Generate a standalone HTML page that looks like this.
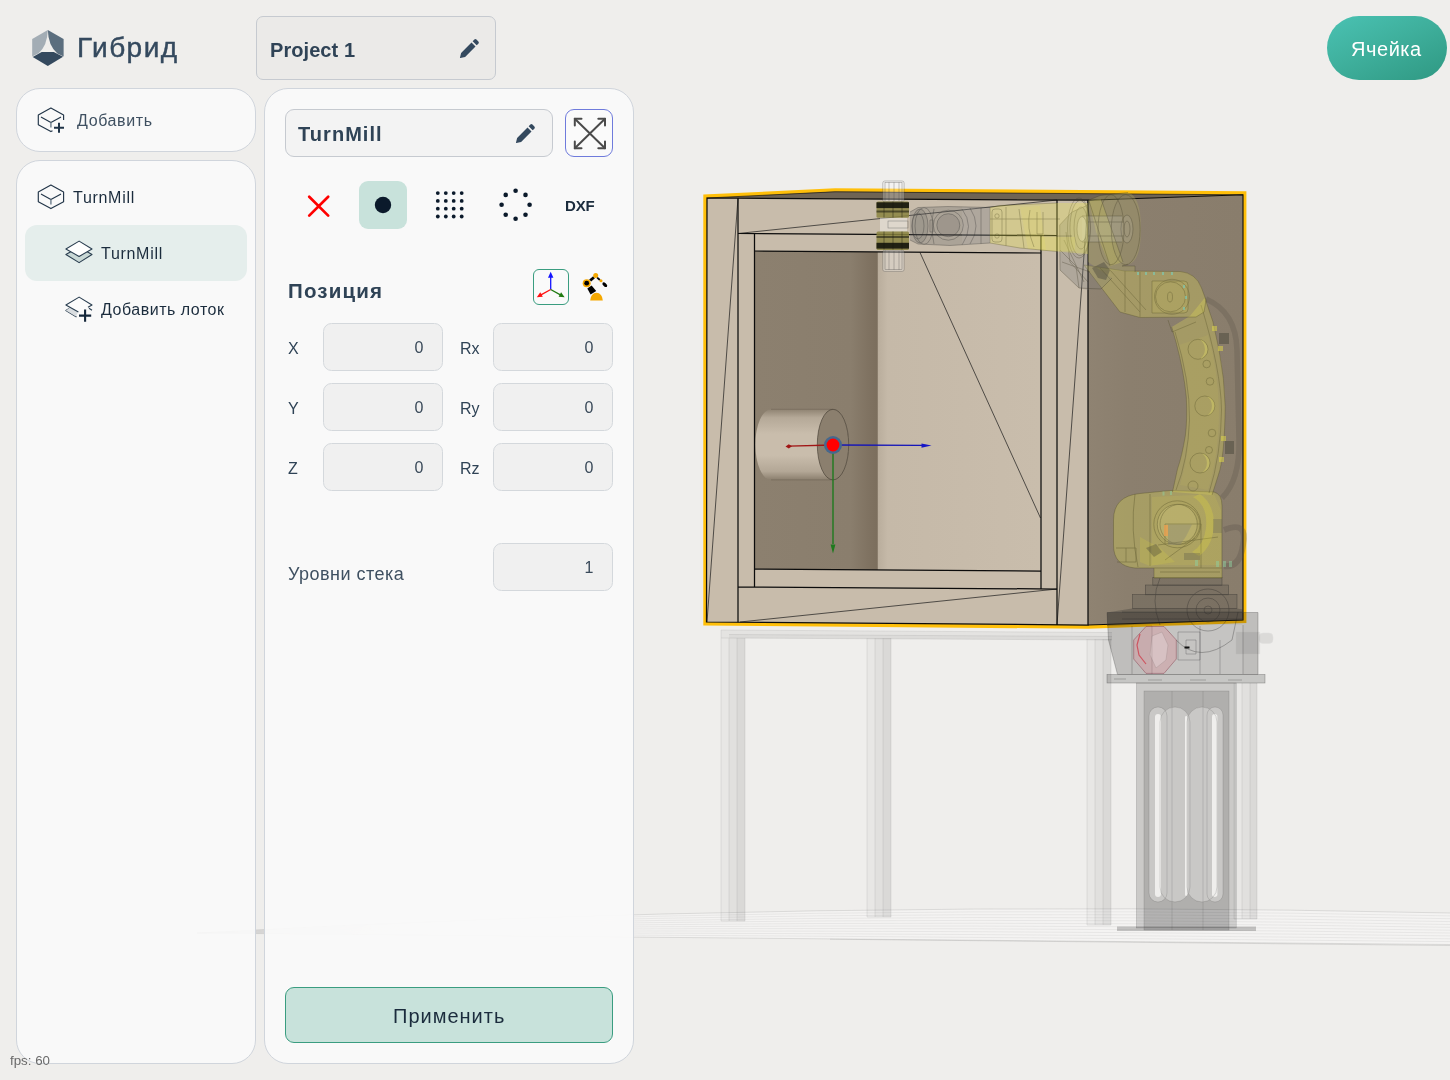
<!DOCTYPE html>
<html lang="ru">
<head>
<meta charset="utf-8">
<title>Гибрид</title>
<style>
*{box-sizing:border-box;margin:0;padding:0}
html,body{width:1450px;height:1080px;overflow:hidden;background:#efeeec;font-family:"Liberation Sans",sans-serif;color:#2f4356}
.abs{position:absolute}
#scene{position:absolute;left:0;top:0;width:1450px;height:1080px}
.panel{position:absolute;background:rgba(250,250,250,0.93);border:1px solid #d0d5dc;border-radius:24px}
.t{position:absolute;white-space:nowrap;line-height:1;will-change:transform}
.inp{will-change:transform;position:absolute;width:120px;height:48px;background:#f0f0f0;border:1px solid #d4d8dc;border-radius:8.5px;font-size:16px;color:#3a4a5a;text-align:right;padding:16px 18.5px 0 0;line-height:1}
.lbl{will-change:transform;position:absolute;font-size:16px;color:#2f4356;line-height:1;white-space:nowrap}
</style>
</head>
<body>
<!--SCENE-->
<svg id="scene" viewBox="0 0 1450 1080">
<defs>
  <linearGradient id="gDark" x1="0" x2="1" y1="0" y2="0">
    <stop offset="0" stop-color="#8c806f"/><stop offset="0.78" stop-color="#8a7e6d"/><stop offset="0.93" stop-color="#7f7261"/><stop offset="1" stop-color="#7b6e5d"/>
  </linearGradient>
  <linearGradient id="gSide" x1="0" x2="1" y1="0" y2="0">
    <stop offset="0" stop-color="#8f8372"/><stop offset="0.25" stop-color="#8b7f6e"/><stop offset="1" stop-color="#897d6c"/>
  </linearGradient>
  <linearGradient id="gBack" x1="0" x2="1" y1="0" y2="0">
    <stop offset="0" stop-color="#b9ad9c"/><stop offset="0.06" stop-color="#c5b9a8"/><stop offset="1" stop-color="#c9bdac"/>
  </linearGradient>
  <linearGradient id="gCyl" x1="0" x2="0" y1="0" y2="1">
    <stop offset="0" stop-color="#8f8372"/><stop offset="0.12" stop-color="#b5a998"/><stop offset="0.35" stop-color="#c9bdac"/><stop offset="0.65" stop-color="#c9bdac"/><stop offset="0.88" stop-color="#b3a796"/><stop offset="1" stop-color="#8b7f6e"/>
  </linearGradient>
</defs>

<!-- floor grid -->
<path d="M197 933 Q810 898.6 1450 913 L1450 944.5 Z" fill="#fff" opacity="0.32"/>
<g id="floor" stroke="#888" stroke-width="0.55" fill="none" opacity="0.55"><path d="M197 933 Q810 898.6 1450 913.0" opacity="0.75"/><path d="M197 933 Q810 902.2 1450 915.9" opacity="0.4"/><path d="M197 933 Q810 905.9 1450 918.7" opacity="0.4"/><path d="M197 933 Q810 909.6 1450 921.6" opacity="0.4"/><path d="M197 933 Q810 913.2 1450 924.5" opacity="0.4"/><path d="M197 933 Q810 916.9 1450 927.3" opacity="0.4"/><path d="M197 933 Q810 920.5 1450 930.2" opacity="0.4"/><path d="M197 933 Q810 924.1 1450 933.0" opacity="0.4"/><path d="M197 933 Q810 927.8 1450 935.9" opacity="0.4"/><path d="M197 933 Q810 931.5 1450 938.8" opacity="0.4"/><path d="M197 933 Q810 935.1 1450 941.6" opacity="0.4"/><path d="M197 933 Q810 938.8 1450 944.5" opacity="0.75"/><path d="M830 939.2 L1450 945.5" opacity="0.8"/></g>

<!-- table -->
<g id="table">
  <path d="M721 630 L1112 632.5 L1112 640 L721 638 Z" fill="#000" fill-opacity="0.045"/>
  <path d="M729 634.5 L1112 636.5 L1112 640 L729 638 Z" fill="#000" fill-opacity="0.03"/>
  <g fill="#000" fill-opacity="0.028"><rect x="721" y="638" width="24" height="283"/><rect x="729" y="638" width="16" height="283"/><rect x="737" y="638" width="8" height="283"/><rect x="867" y="638" width="24" height="279"/><rect x="875" y="638" width="16" height="279"/><rect x="883" y="638" width="8" height="279"/><rect x="1087" y="639" width="24" height="286"/><rect x="1095" y="639" width="16" height="286"/><rect x="1103" y="639" width="8" height="286"/><rect x="1234" y="683" width="23" height="236"/><rect x="1242" y="683" width="15" height="236"/><rect x="1250" y="683" width="7" height="236"/></g>
  <g fill="none" stroke="#777" stroke-width="0.5" opacity="0.3"><path d="M721 638V921H745V638 M729 638V921 M737 638V921"/><path d="M867 638V917H891V638 M875 638V917 M883 638V917"/><path d="M1087 639V925H1111V639 M1095 639V925 M1103 639V925"/><path d="M1234 683V919H1257V683 M1242 683V919 M1250 683V919"/><path d="M721 630 L1112 632.5 M729 634.5 L1112 636.5 M721 638 L1112 640 M721 630 V638"/></g>
</g>

<!-- pedestal -->
<g id="pedestal">
  <rect x="1136.4" y="683" width="99.8" height="245" fill="#000" fill-opacity="0.15"/>
  <rect x="1144" y="691" width="85" height="239" fill="#000" fill-opacity="0.135"/>
  <path d="M1149 716.0 A9.0 9.0 0 0 1 1167 716.0 V893.0 A9.0 9.0 0 0 1 1149 893.0 Z M1160 722.0 A15.0 15.0 0 0 1 1190 722.0 V887.0 A15.0 15.0 0 0 1 1160 887.0 Z M1187 722.0 A15.0 15.0 0 0 1 1217 722.0 V887.0 A15.0 15.0 0 0 1 1187 887.0 Z M1207 715.0 A8.0 8.0 0 0 1 1223 715.0 V894.0 A8.0 8.0 0 0 1 1207 894.0 Z " fill="#efeeec" fill-opacity="0.40"/>
  <g fill="#efeeec">
    <rect x="1155" y="714" width="6" height="183" rx="3"/>
    <rect x="1185" y="716" width="2.4" height="180" rx="1.2"/>
    <rect x="1212" y="714" width="5.4" height="183" rx="2.7"/>
  </g>
  <g fill="none" stroke="#555" stroke-width="0.5" opacity="0.4">
    <path d="M1149 716.0 A9.0 9.0 0 0 1 1167 716.0 V893.0 A9.0 9.0 0 0 1 1149 893.0 Z M1160 722.0 A15.0 15.0 0 0 1 1190 722.0 V887.0 A15.0 15.0 0 0 1 1160 887.0 Z M1187 722.0 A15.0 15.0 0 0 1 1217 722.0 V887.0 A15.0 15.0 0 0 1 1187 887.0 Z M1207 715.0 A8.0 8.0 0 0 1 1223 715.0 V894.0 A8.0 8.0 0 0 1 1207 894.0 Z "/>
    <path d="M1172 691V930M1203 691V930"/>
    <rect x="1136.4" y="683" width="99.8" height="245"/><rect x="1144" y="691" width="85" height="239"/>
  </g>
  <rect x="1117" y="926.5" width="139" height="4.5" fill="#000" opacity="0.2"/>
</g>
<!-- box -->
<g id="box">
  <!-- yellow selection outline -->
  <path d="M703.3 625.6 L703.3 194.6 L835 188.2 L1246.4 191.2 L1246.4 622.9 L1088 628.7 Z" fill="#ffbf0a"/>
  <!-- top face -->
  <path d="M707 198 L835 191.6 L1243 194.8 L1088 200.3 Z" fill="#6f6454"/>
  <!-- side face -->
  <path d="M1088 200 L1243 194.8 L1243 620 L1088 625 Z" fill="url(#gSide)"/>
  <!-- front face -->
  <path d="M707 198 L1088 200 L1088 625 L706.5 622 Z" fill="#c8bcab"/>
  <!-- interior back (light) & dark side -->
  <path d="M877.8 252 L1041 253 L1041 571 L877.8 570 Z" fill="url(#gBack)"/>
  <path d="M754.5 251 L877.8 252 L877.8 570 L754.5 569 Z" fill="url(#gDark)"/>
  <!-- cylinder -->
  <path d="M771 409.3 L833 409.3 A15.7 35.3 0 0 1 833 479.9 L771 479.9 A15.7 35.3 0 0 1 771 409.3 Z" fill="url(#gCyl)"/>
  <path d="M771 409.3 L833 409.3 M771 479.9 L833 479.9" stroke="#5a5043" stroke-width="0.6" opacity="0.6"/>
  <ellipse cx="833" cy="444.6" rx="15.7" ry="35.3" fill="#8b7f6e" stroke="#3c352c" stroke-width="0.6"/>
  <!-- frame cover on cylinder left -->
  <rect x="739" y="400" width="15.5" height="90" fill="#c8bcab"/>
  <!-- thin diagonals -->
  <g stroke="#1a1a1a" stroke-width="0.7" fill="none">
    <path d="M707 622 L738 198"/>
    <path d="M738 233.5 L1057 200"/>
    <path d="M1057 625 L1088 200"/>
    <path d="M740 622 L1057 589"/>
    <path d="M920 252.5 L1040.5 518"/>
    <path d="M1088 200 L1243 620" opacity="0"/>
  </g>
  <!-- thick edges -->
  <g stroke="#0c0c0c" stroke-width="1.25" fill="none" stroke-linejoin="miter">
    <path d="M707 198 L1088 200.2 L1088 625 L706.5 622 Z"/>
    <path d="M738 198.2 V622.2"/>
    <path d="M1057 200 V625"/>
    <path d="M738 233.5 L1057 235.5"/>
    <path d="M738 587 L1057 589"/>
    <path d="M754.5 233.6 V587.1"/>
    <path d="M1041 235.4 V589"/>
    <path d="M754.5 251 L1041 253"/>
    <path d="M754.5 569 L1041 571"/>
  </g>
  <g stroke="#0c0c0c" stroke-width="1.1" fill="none">
    <path d="M1088 200.2 L1243 194.8 L1243 620 L1088 625"/>
    <path d="M707 198 L835 191.8 L1243 194.8" stroke-width="0.9" opacity="0.7"/>
  </g>
  <!-- gizmo -->
  <g>
    <path d="M833 445 L789 446.2" stroke="#a01515" stroke-width="1.3"/>
    <path d="M785.5 446.4 L788.8 444.2 L792 446.2 L788.8 448.4 Z" fill="#a01515"/>
    <path d="M833 445 L922 445.4" stroke="#1515b8" stroke-width="1.3"/>
    <path d="M931.5 445.6 L921.5 443.4 L921.5 447.8 Z" fill="#1515c8"/>
    <path d="M833 445 L833 544" stroke="#1e7a1e" stroke-width="1.4"/>
    <path d="M833 553.5 L830.6 544.5 L835.4 544.5 Z" fill="#1e7a1e"/>
    <circle cx="833" cy="445" r="9" fill="#46688c"/>
    <circle cx="833" cy="445" r="6.4" fill="#ff0000"/>
  </g>
</g>

<!-- robot -->
<g id="robot">
  <!-- grey base below / inside box -->
  <g id="rbase">
    <path d="M1107 612.5 L1258 612.5 L1258 674.5 L1117.5 674.5 L1108.5 640 Z" fill="#000" opacity="0.2"/>
    <path d="M1152 625 L1243 625 L1243 674.5 L1152 674.5 Z" fill="#fff" opacity="0.10"/>
    <rect x="1107" y="674.5" width="158" height="8.5" fill="#000" opacity="0.17"/>
    <g fill="none" stroke="#333" stroke-width="0.6" opacity="0.45">
      <rect x="1107" y="674.5" width="158" height="8.5"/>
      <path d="M1107 612.5 L1258 612.5 L1258 674.5 L1117.5 674.5 L1108.5 640 Z"/>
      <path d="M1132 626V674 M1152 626V674 M1200 626V674 M1220 640V674 M1243 625V674"/>
      <path d="M1114 679h12 M1148 680h14 M1190 680h16 M1228 680h14"/>
    </g>
    <!-- stacked rings -->
    <rect x="1152.8" y="577.6" width="69.2" height="7.6" fill="#3a3a3a" opacity="0.17"/>
    <rect x="1145.4" y="585" width="83" height="9.8" fill="#3a3a3a" opacity="0.19"/>
    <rect x="1132.6" y="594.6" width="104.4" height="14" fill="#3a3a3a" opacity="0.19"/>
    <path d="M1107 612.5 L1132 608.4 L1237 608.4 L1243 609.5 L1243 620 L1107 626 Z" fill="#2a2a2a" opacity="0.30"/>
    <g fill="none" stroke="#222" stroke-width="0.6" opacity="0.5">
      <rect x="1152.8" y="577.6" width="69.2" height="7.6"/><rect x="1145.4" y="585" width="83" height="9.8"/><rect x="1132.6" y="594.6" width="104.4" height="14"/>
      <circle cx="1208" cy="610" r="21"/><circle cx="1208" cy="610" r="12"/><circle cx="1208" cy="610" r="4"/>
      <path d="M1160 578 Q1150 600 1160 625 M1122 612h120 M1122 619h120"/>
      <path d="M1176 640 Q1200 665 1232 640 L1238 612"/>
    </g>
    <!-- bolt right -->
    <rect x="1259" y="633" width="14" height="10.5" rx="4" fill="#000" opacity="0.08" stroke="#444" stroke-width="0.5"/>
    <rect x="1236" y="632" width="24" height="22" fill="#000" opacity="0.07" stroke="#555" stroke-width="0.4"/>
    <!-- pink octagon -->
    <path d="M1146 626.5 L1164 626.5 L1176.3 640 L1176.3 659 L1164 673.4 L1146 673.4 L1133.7 659 L1133.7 640 Z" fill="#d88c96" opacity="0.36"/>
    <path d="M1146 626.5 L1164 626.5 L1176.3 640 L1176.3 659 L1164 673.4 L1146 673.4 L1133.7 659 L1133.7 640 Z" fill="none" stroke="#7a3040" stroke-width="0.7" opacity="0.6"/>
    <path d="M1140 634 L1137 645 L1139 655 L1146 664" fill="none" stroke="#d03040" stroke-width="1.2" opacity="0.7"/>
    <path d="M1152 636 L1162 632 L1168 645 L1166 660 L1156 668 L1150 655 Z" fill="#fff" opacity="0.22" stroke="#444" stroke-width="0.5"/>
    <path d="M1178 632 h22 v28 h-22 z M1186 640 h10 v14 h-10z" fill="none" stroke="#444" stroke-width="0.5" opacity="0.6"/>
    <rect x="1184.5" y="646.5" width="5" height="2" fill="#111"/>
  </g>

  <!-- cable -->
  <path d="M1206 299 Q1236 312 1237 350 L1239 440 Q1240 480 1222 498" fill="none" stroke="#5a5148" stroke-width="5.5" opacity="0.28"/>
  <path d="M1224 530 Q1248 520 1243 545 Q1240 568 1224 566" fill="none" stroke="#5a5148" stroke-width="6" opacity="0.3"/>

  <!-- shoulder (yellow) -->
  <g id="shoulder">
    <path d="M1113.5 520 Q1113.5 496 1140 493.5 L1170 490.5 L1214 492 Q1222 494 1222 506 L1222 566 L1222 578 L1154 578 L1154 568 L1135 568 Q1113.5 566 1113.5 545 Z" fill="#ebe650" opacity="0.29"/>
    <path d="M1152 497 L1214 494 L1221 510 L1221 565 L1152 565 Z" fill="#ebe650" opacity="0.10"/>
    <circle cx="1177.3" cy="524.3" r="20" fill="#e0d890" opacity="0.22"/>
    <g fill="none" stroke="#4a4620" stroke-width="0.6" opacity="0.55">
      <path d="M1113.5 520 Q1113.5 496 1140 493.5 L1170 490.5 L1214 492 Q1222 494 1222 506 L1222 578 L1154 578 L1154 568 L1135 568 Q1113.5 566 1113.5 545 Z"/>
      <circle cx="1177.3" cy="524.3" r="20"/><circle cx="1177.3" cy="524.3" r="23.5"/><circle cx="1180" cy="524.3" r="20"/>
      <path d="M1135 494 Q1130 530 1138 567 M1150 494 V566 M1116 548 h20 v14 h-19 M1126 548 v14"/>
      <path d="M1165 524 h36 v44 M1165 524 v20 M1158 545 l60 -8 M1165 560 l30 -22"/>
      <path d="M1154 568 h68 M1160 572 h60"/>
    </g>
        <path d="M1168 524.500 h24 l-6 12 l-6 8.500 h-12 z" fill="#777" opacity="0.28"/>
    <path d="M1193 497 Q1208 505 1206 528 Q1204 545 1192 552 L1199 556 Q1214 545 1214 522 Q1213 503 1200 494 Z" fill="#f0ea30" opacity="0.22"/>
    <path d="M1140 537 L1160 548 L1175 562 L1150 566 L1140 562 Z" fill="#f0ea30" opacity="0.14"/>
    <path d="M1146 548 l10 -4 l6 8 l-8 5 z" fill="#333" opacity="0.3"/>
    <rect x="1184" y="553" width="16" height="7" fill="#444" opacity="0.25"/>
    <rect x="1213" y="519" width="9" height="14" fill="#555" opacity="0.25"/>
    <rect x="1164" y="525" width="4" height="11" fill="#e8a050" opacity="0.8"/>
    <g fill="#8fd0a0" opacity="0.5"><rect x="1162.500" y="491.500" width="2" height="4"/><rect x="1170" y="491" width="2" height="4"/><rect x="1195" y="560" width="3" height="6"/><rect x="1216" y="561" width="3" height="6"/><rect x="1223" y="561" width="3" height="6"/><rect x="1229" y="561" width="3" height="6"/></g>
    
  </g>

  <!-- upper arm -->
  <g id="upperarm">
    <path d="M1171.700 327 L1176 342 Q1184 372 1186.300 397 Q1187.500 420 1185.300 436 Q1182 456 1177.500 469 L1172.500 492 L1212 495 L1218.400 474.800 Q1224.500 458 1225.200 406.700 Q1224.500 378 1219 350 L1213 322 L1204.800 297.800 L1190 316 Z" fill="#ebe650" opacity="0.27"/>
    <path d="M1179 345 Q1190 380 1190 420 Q1189 455 1180 485 L1208 490 Q1219 455 1219 410 Q1218 370 1208 335 Z" fill="#ebe650" opacity="0.07"/>
    <g fill="none" stroke="#4a4620" stroke-width="0.6" opacity="0.5">
      <path d="M1171.700 327 L1176 342 Q1184 372 1186.300 397 Q1187.500 420 1185.300 436 Q1182 456 1177.500 469 L1172.500 492"/>
      <path d="M1204.800 297.800 L1213 322 L1219 350 Q1224.500 378 1225.200 406.700 Q1224.500 458 1218.400 474.800 L1212 495"/>
      <path d="M1175 332 Q1190 380 1189.500 420 Q1188 460 1176 490"/>
      <path d="M1201 305 Q1221 370 1221.500 410 Q1221 455 1209 493"/>
      <circle cx="1198" cy="349.300" r="10"/><circle cx="1204.800" cy="406" r="10"/><circle cx="1200" cy="463" r="10"/>
      <circle cx="1206.700" cy="364" r="3.800"/><circle cx="1210" cy="381.400" r="3.800"/><circle cx="1212" cy="433" r="3.800"/><circle cx="1209" cy="450" r="3.500"/>
      <circle cx="1193" cy="486" r="5"/>
    </g>
    <g fill="#e9e36a" opacity="0.35"><path d="M1200 339.600 A10 10 0 0 1 1200 359 A12 12 0 0 0 1200 339.600Z"/><path d="M1207 396.300 A10 10 0 0 1 1207 415.700 A12 12 0 0 0 1207 396.300Z"/><path d="M1202 453.300 A10 10 0 0 1 1202 472.700 A12 12 0 0 0 1202 453.300Z"/></g>
    <!-- small brackets -->
    <g fill="#3a3a30" opacity="0.4"><rect x="1219" y="333" width="10" height="11"/><rect x="1225" y="441" width="9" height="13"/></g>
    <g fill="#e3da4a" opacity="0.5"><rect x="1212" y="326" width="5" height="5"/><rect x="1218" y="346" width="5" height="5"/><rect x="1221" y="436" width="5" height="5"/><rect x="1219" y="457" width="5" height="5"/></g>
  </g>

  <!-- joint 3 box -->
  <g id="j3">
    <path d="M1084 265 L1125 271 L1180 271.500 Q1196 273 1201.500 288 L1206 300 L1204 312 L1196 317 L1140 317.500 L1120 312 Z" fill="#ebe650" opacity="0.27"/>
    <path d="M1152 281 h32 q4 0 4 4 v24 q0 4 -4 4 h-32 z" fill="#ebe650" opacity="0.10"/>
    <g fill="none" stroke="#4a4620" stroke-width="0.6" opacity="0.5">
      <path d="M1084 265 L1125 271 L1180 271.500 Q1196 273 1201.500 288 L1206 300 L1204 312 L1196 317 L1140 317.500 L1120 312 Z"/>
      <path d="M1152 281 h32 q4 0 4 4 v24 q0 4 -4 4 h-32 z"/>
      <circle cx="1170.500" cy="296.800" r="15"/><circle cx="1172" cy="296.800" r="17.500"/>
      <ellipse cx="1170" cy="297" rx="2.500" ry="5"/>
      <path d="M1100 268 L1140 312 M1110 270 L1146 310 M1125 271 V312 M1140 272 V317"/>
      <path d="M1168 320 L1172 332 L1196 322"/>
    </g>
    <g fill="#7fc8b0" opacity="0.7"><rect x="1137" y="272" width="2" height="3"/><rect x="1145" y="272" width="2" height="3"/><rect x="1153" y="272" width="2" height="3"/><rect x="1162" y="272" width="2" height="3"/><rect x="1171" y="272" width="2" height="3"/><rect x="1183" y="285" width="2" height="3"/><rect x="1185" y="296" width="2" height="3"/><rect x="1183" y="307" width="2" height="3"/></g>
  </g>

  <!-- elbow housing -->
  <g id="elbow">
    <path d="M1059.700 225 L1072 212 L1088 205 L1088 290 L1079 288 L1060 270 Z" fill="#777" opacity="0.30"/>
    <path d="M1088 290 L1101 289 L1112 278 L1088 262 Z" fill="#777" opacity="0.2"/>
    <path d="M1088 200.5 L1100 195.500 L1128 192.500 Q1141 196 1141 229 Q1141 262 1128 264.500 L1122 266 L1135 266 L1135 272 L1100 270 L1088 262 Z" fill="#b4ae62" opacity="0.30"/>
    <path d="M1089 201 L1101 199 L1123 262 L1110 266 L1096 232 Z" fill="#ebe650" opacity="0.20"/>
    <ellipse cx="1125.700" cy="229.700" rx="14.400" ry="35" fill="#8a8470" opacity="0.20"/>
    <ellipse cx="1080" cy="228" rx="10" ry="27.500" fill="#e6e090" opacity="0.18"/>
    <path d="M1082 216 h40 v26 h-40 z" fill="#ccc" opacity="0.20"/>
    <ellipse cx="1082" cy="229" rx="5" ry="12.500" fill="#fff" opacity="0.22"/>
    <ellipse cx="1127" cy="229" rx="6" ry="14" fill="#ddd" opacity="0.12"/>
    <g fill="none" stroke="#3a3624" stroke-width="0.6" opacity="0.5">
      <ellipse cx="1125.700" cy="229.700" rx="14.400" ry="35"/>
      <ellipse cx="1111" cy="229.700" rx="13" ry="35"/>
      <ellipse cx="1127" cy="229" rx="6" ry="14"/><ellipse cx="1127" cy="229" rx="3" ry="8"/>
      <ellipse cx="1080" cy="228" rx="10" ry="27.500"/><ellipse cx="1081" cy="228" rx="7" ry="21"/><ellipse cx="1082" cy="229" rx="5" ry="12.500"/>
      <ellipse cx="1079" cy="228" rx="11.500" ry="30"/>
      <path d="M1088 200.5 L1100 195.500 L1128 192.500 M1128 264.500 L1122 266 L1135 266 L1135 272"/>
      <path d="M1101 199 L1123 262 M1089 201 L1110 266 M1082 216 h40 M1082 242 h40 M1088 222 h36 M1088 236 h36"/>
      <path d="M1059.700 225 L1072 212 L1088 205 M1059.700 225 L1060 270 L1079 288 L1101 289 L1112 278"/>
      <path d="M1064 240 L1084 282 M1062 262 L1090 272 M1060 250 L1076 266 L1079 288 M1066 232 L1070 262 L1088 282"/>
    </g>
    <path d="M1092 268 l12 -6 l6 8 l-4 10 l-8 -2 z" fill="#333" opacity="0.35"/>
  </g>

  <!-- forearm -->
  <g id="forearm">
    <path d="M990 207.500 L1000 205.500 L1057 203 L1088 203 L1088 254 L1057 251.500 L1020 248 L990 243 Z" fill="#ebe650" opacity="0.30"/>
    <path d="M1020 207 L1040 206 L1046 250 L1028 249 Z" fill="#ebe650" opacity="0.16"/>
    <path d="M1041 237 h34 v14 h-34 z" fill="#ebe650" opacity="0.16"/>
    <g fill="none" stroke="#4a4620" stroke-width="0.6" opacity="0.5">
      <path d="M990 207.500 L1000 205.500 L1057 203 M990 243 L1020 248 L1057 251.500 M990 207.500 V243"/>
      <rect x="992" y="209" width="10" height="33" rx="3"/><circle cx="997" cy="216" r="2.200"/><circle cx="997" cy="236" r="2.200"/>
      <path d="M1006 207 V246 M1019 209 L1024 248 M1030 210 Q1026 228 1034 247 M1037 212 v22 h6 v-22"/>
      <path d="M990 219 h70 M1006 236 h66"/>
    </g>
  </g>

  <!-- wrist -->
  <g id="wrist">
    <path d="M962 207 L990 207.500 L990 243 L962 245 Z" fill="#fff" opacity="0.10"/>
    <path d="M910 212 L918 207.500 L948 206.500 L990 207.500 L990 243 L950 245.500 L918 244 L910 240 Z" fill="#6b6b6b" opacity="0.30"/>
    <circle cx="948.300" cy="225.200" r="11.500" fill="#5d5a58" opacity="0.16"/>
    <ellipse cx="920" cy="226" rx="8" ry="17" fill="#555" opacity="0.14"/>
    <g fill="none" stroke="#2a2a2a" stroke-width="0.6" opacity="0.5">
      <path d="M910 212 L918 207.500 L948 206.500 L990 207.500 M910 240 L918 244 L950 245.500 L990 243"/>
      <ellipse cx="920" cy="226" rx="8" ry="17"/><ellipse cx="918" cy="226" rx="6" ry="13"/><ellipse cx="924" cy="226" rx="9" ry="18.500"/>
      <circle cx="948.300" cy="225.200" r="11.500"/><circle cx="948.300" cy="225.200" r="15"/>
      <path d="M934 209 Q930 226 934 244 M962 209 Q975 226 962 245 M970 208 Q982 226 970 244 M981 208 V244"/>
      <path d="M933 220 v12 h-3 v-12z"/>
    </g>
  </g>

  <!-- tool -->
  <g id="tool">
    <rect x="882.800" y="181" width="21.300" height="21" rx="2" fill="#fff" opacity="0.28"/>
    <rect x="882.800" y="250" width="21.300" height="21.400" rx="2" fill="#fff" opacity="0.28"/>
    <g fill="none" stroke="#333" stroke-width="0.5" opacity="0.55">
      <rect x="882.800" y="181" width="21.300" height="21" rx="2"/><rect x="885" y="182.500" width="17" height="19"/><path d="M889 182v19M894 182v19M899 182v19"/>
      <rect x="882.800" y="250" width="21.300" height="21.400" rx="2"/><rect x="885" y="250" width="17" height="19.500"/><path d="M889 251v19M894 251v19M899 251v19"/>
    </g>
    <rect x="880" y="217.600" width="27" height="14" fill="#f4f2ee" opacity="0.5"/>
    <rect x="888" y="221" width="20" height="7" fill="none" stroke="#555" stroke-width="0.5" opacity="0.7"/>
    <rect x="876.500" y="201.400" width="32.500" height="16.400" rx="1.500" fill="#8a8440" opacity="0.85"/>
    <rect x="876.500" y="202.300" width="32.500" height="5.800" fill="#15150c" opacity="0.9"/>
    <rect x="876.500" y="210.500" width="32.500" height="2" fill="#15150c" opacity="0.55"/>
    <rect x="876.500" y="231.400" width="32.500" height="18.600" rx="1.500" fill="#8a8440" opacity="0.85"/>
    <rect x="876.500" y="242.800" width="32.500" height="5.800" fill="#15150c" opacity="0.9"/>
    <rect x="876.500" y="236" width="32.500" height="2" fill="#15150c" opacity="0.55"/>
    <g stroke="#15150c" stroke-width="0.7" opacity="0.6"><path d="M884 201.500v16M893 201.500v16M902 201.500v16M884 231.500v18M893 231.500v18M902 231.500v18"/></g>
  </g>
</g>

</svg>

<!--/SCENE-->

<!-- logo -->
<svg class="abs" style="left:31px;top:29px" width="34" height="38" viewBox="0 0 34 38">
  <path d="M16.8 1 L1.2 10.1 L1.2 27.5 L7.6 24.2 Q16.4 16.5 16.8 1 Z" fill="#a3adb5"/>
  <path d="M16.8 1 L32.6 10.1 L32.6 27.5 L26.4 24.6 Q17.2 16.5 16.8 1 Z" fill="#5b6e7e"/>
  <path d="M1.7 27.9 L10.7 23.1 L22.8 23.1 L32.1 27.7 L16.8 36.9 Z" fill="#34495e"/>
</svg>
<div class="t" style="left:76.5px;top:34.4px;font-size:28px;letter-spacing:1.45px;color:#34495e;-webkit-text-stroke:0.45px #34495e">Гибрид</div>

<!-- project box -->
<div class="abs" style="left:256px;top:16px;width:240px;height:64px;background:#ebeae8;border:1px solid #c6cad0;border-radius:7px"></div>
<div class="t" style="left:269.5px;top:39.9px;font-size:20px;font-weight:bold;letter-spacing:0.07px;color:#2f4356">Project 1</div>
<svg class="abs" style="left:458.5px;top:38px" width="21" height="21" viewBox="0 0 22 22"><path d="M2.2 15.6 L1 20.6 Q0.9 21.1 1.4 21 L6.4 19.8 L17.3 8.9 L13.1 4.7 Z M14.3 3.5 L18.5 7.7 L20.3 5.9 Q21.4 4.8 20.3 3.7 L18.3 1.7 Q17.2 0.6 16.1 1.7 Z" fill="#34495e"/></svg>

<!-- cell button -->
<div class="abs" style="left:1327px;top:16px;width:120px;height:64px;border-radius:32px;background:linear-gradient(155deg,#4ac2b3 0%,#3fb09d 45%,#2f9882 100%)"></div>
<div class="t" style="left:1350.6px;top:39px;font-size:20px;letter-spacing:0.55px;color:#fff">Ячейка</div>

<!-- add panel -->
<div class="panel" style="left:16px;top:88px;width:240px;height:64px"></div>
<svg class="abs" style="left:37px;top:107px" width="30" height="28" viewBox="0 0 30 28"><path d="M26.6 13 L26.6 7.9 L13.9 1 L1.3 7.9 L1.3 17.7 L13.9 24.6 L15.5 23.7" fill="none" stroke="#223548" stroke-width="1.15" stroke-linejoin="round"/><path d="M4.4 10.2 L13.9 15.4 L23.6 10.2" fill="none" stroke="#223548" stroke-width="1.15" stroke-linecap="round" stroke-linejoin="round"/><path d="M13.9 15.6 V20.4" stroke="#7d8b98" stroke-width="1.6"/><path d="M17 20.8 H27 M22 15.8 V25.8" stroke="#1f3347" stroke-width="2"/></svg>
<div class="t" style="left:76.5px;top:113.2px;font-size:16px;letter-spacing:0.62px;color:#3f5061">Добавить</div>

<!-- tree panel -->
<div class="panel" style="left:16px;top:160px;width:240px;height:904px"></div>
<div class="abs" style="left:25px;top:225px;width:222px;height:56px;border-radius:12px;background:#e5eeec"></div>
<svg class="abs" style="left:37px;top:184px" width="30" height="28" viewBox="0 0 30 28"><path d="M13.9 1 L26.6 7.9 L26.6 17.7 L13.9 24.6 L1.3 17.7 L1.3 7.9 Z" fill="none" stroke="#223548" stroke-width="1.15" stroke-linejoin="round"/><path d="M4.4 10.2 L13.9 15.4 L23.6 10.2" fill="none" stroke="#223548" stroke-width="1.15" stroke-linecap="round" stroke-linejoin="round"/><path d="M13.9 15.6 V20.4" stroke="#7d8b98" stroke-width="1.6"/></svg>
<div class="t" style="left:73px;top:190.4px;font-size:16px;letter-spacing:0.7px;color:#1b2c3d">TurnMill</div>
<svg class="abs" style="left:65px;top:240px" width="30" height="28" viewBox="0 0 30 28"><path d="M0.9 14.5 L14.1 22.6 L27 14.5 L14.1 7 Z" fill="#c9d8d6" stroke="#2a3e50" stroke-width="1.1" stroke-linejoin="round"/><path d="M14.1 1.1 L27 9 L14.1 16.4 L0.9 9 Z" fill="#fff" stroke="#2a3e50" stroke-width="1.1" stroke-linejoin="round"/></svg>
<div class="t" style="left:101px;top:246px;font-size:16px;letter-spacing:0.7px;color:#1b2c3d">TurnMill</div>
<svg class="abs" style="left:65px;top:296px" width="30" height="28" viewBox="0 0 30 28"><path d="M5 12 L0.9 14.5 L11.5 21" fill="#dcdfe2" stroke="#2a3e50" stroke-width="1.1" stroke-linejoin="round"/><path d="M5 11.5 L0.9 14.5 L11 20.5 L13 15.8 Z" fill="#d9dde0"/><path d="M23 11.3 L27 9 L14.1 1.1 L0.9 9 L13.4 16" fill="#fcfcfc" stroke="#2a3e50" stroke-width="1.1" stroke-linejoin="round"/><path d="M24 12.2 L27 14.3" stroke="#2a3e50" stroke-width="1.1"/><path d="M14 19.6 H26.2 M20.1 13.5 V25.7" stroke="#15273a" stroke-width="2.1"/></svg>
<div class="t" style="left:100.7px;top:302px;font-size:16px;letter-spacing:0.52px;color:#1b2c3d">Добавить лоток</div>

<!-- right panel -->
<div class="panel" style="left:264px;top:88px;width:370px;height:976px"></div>
<div class="abs" style="left:285px;top:109px;width:268px;height:48px;background:#f3f3f3;border:1px solid #c6cad0;border-radius:9px"></div>
<div class="t" style="left:298.3px;top:124px;font-size:20px;font-weight:bold;letter-spacing:1.05px;color:#2f4356">TurnMill</div>
<svg class="abs" style="left:515.3px;top:122.5px" width="21" height="21" viewBox="0 0 22 22"><path d="M2.2 15.6 L1 20.6 Q0.9 21.1 1.4 21 L6.4 19.8 L17.3 8.9 L13.1 4.7 Z M14.3 3.5 L18.5 7.7 L20.3 5.9 Q21.4 4.8 20.3 3.7 L18.3 1.7 Q17.2 0.6 16.1 1.7 Z" fill="#34495e"/></svg>
<div class="abs" style="left:565px;top:109px;width:48px;height:48px;border:1px solid #6f7bdc;border-radius:9px;background:#fafafa"></div>
<svg class="abs" style="left:565px;top:109px" width="48" height="48" viewBox="0 0 48 48" fill="none" stroke="#4a4a4a" stroke-width="2" stroke-linecap="round" stroke-linejoin="round">
  <path d="M9.8 9.8 L40 39.2 M40 9.8 L9.8 39.2"/>
  <path d="M9.8 16.5 V9.8 H16.5 M33.3 9.8 H40 V16.5 M40 32.5 V39.2 H33.3 M16.5 39.2 H9.8 V32.5"/>
</svg>

<!-- icon row -->
<svg class="abs" style="left:285px;top:175px" width="340" height="60" viewBox="285 175 340 60">
  <rect x="359" y="181" width="48" height="48" rx="9" fill="#c8e2db"/>
  <path d="M309.2 196.8 L328.2 215.6 M328.2 196.8 L309.2 215.6" stroke="#ff0000" stroke-width="2.7" stroke-linecap="round"/>
  <circle cx="383" cy="205" r="8.2" fill="#0b1a2b"/>
  <g fill="#0b1a2b"><circle cx="437.8" cy="193.1" r="1.9"/><circle cx="437.8" cy="200.9" r="1.9"/><circle cx="437.8" cy="208.7" r="1.9"/><circle cx="437.8" cy="216.5" r="1.9"/><circle cx="445.8" cy="193.1" r="1.9"/><circle cx="445.8" cy="200.9" r="1.9"/><circle cx="445.8" cy="208.7" r="1.9"/><circle cx="445.8" cy="216.5" r="1.9"/><circle cx="453.7" cy="193.1" r="1.9"/><circle cx="453.7" cy="200.9" r="1.9"/><circle cx="453.7" cy="208.7" r="1.9"/><circle cx="453.7" cy="216.5" r="1.9"/><circle cx="461.7" cy="193.1" r="1.9"/><circle cx="461.7" cy="200.9" r="1.9"/><circle cx="461.7" cy="208.7" r="1.9"/><circle cx="461.7" cy="216.5" r="1.9"/></g>
  <g fill="#0b1a2b"><circle cx="529.6" cy="204.8" r="2.3"/><circle cx="525.5" cy="214.7" r="2.3"/><circle cx="515.6" cy="218.8" r="2.3"/><circle cx="505.7" cy="214.7" r="2.3"/><circle cx="501.6" cy="204.8" r="2.3"/><circle cx="505.7" cy="194.9" r="2.3"/><circle cx="515.6" cy="190.8" r="2.3"/><circle cx="525.5" cy="194.9" r="2.3"/></g>
</svg>
<div class="t" style="left:565.3px;top:198px;font-size:15px;font-weight:bold;letter-spacing:-0.2px;color:#1b2c3d">DXF</div>

<div class="t" style="left:287.6px;top:281px;font-size:20.5px;font-weight:bold;letter-spacing:1.15px;color:#2f4356">Позиция</div>
<div class="abs" style="left:533px;top:269px;width:36px;height:36px;border:1px solid #3a9d80;border-radius:6px;background:#fafafa"></div>
<svg class="abs" style="left:533px;top:269px" width="80" height="36" viewBox="533 269 80 36">
  <g stroke-width="1.3" stroke-linecap="butt">
   <path d="M550.7 289.5 V277" stroke="#1414ff"/><path d="M550.7 271.8 L548 277.7 H553.4 Z" fill="#1414ff"/>
   <path d="M550.7 289.5 L541 294.9" stroke="#ff1111"/><path d="M536.8 297.2 L540.3 292.2 L542.8 296.8 Z" fill="#ff1111"/>
   <path d="M550.7 289.5 L560.4 294.9" stroke="#1f7a10"/><path d="M564.6 297.2 L561.1 292.2 L558.6 296.8 Z" fill="#1f7a10"/>
  </g>
  <path d="M590.2 300.4 A6.3 7.6 0 0 1 602.8 300.4 Z" fill="#f5a800"/>
  <path d="M587.3 288.5 L591.6 285.5 L596.2 291.1 L590.6 294.5 Z" fill="#000"/>
  <path d="M589.2 279.5 L593.2 276.2 L594.9 278.2 L591.2 281.5 Z" fill="#000"/>
  <circle cx="586.7" cy="283.2" r="4" fill="#f5a800"/><circle cx="586.7" cy="283.2" r="2.4" fill="#000"/>
  <circle cx="595.7" cy="275.6" r="2.5" fill="#f5a800"/>
  <path d="M597.2 277.6 L599.9 280" stroke="#000" stroke-width="1.9"/>
  <circle cx="601" cy="280.7" r="1.5" fill="#f5a800"/>
  <ellipse cx="604.8" cy="284.7" rx="2.9" ry="1.6" transform="rotate(42 604.8 284.7)" fill="#000"/>
</svg>

<div class="lbl" style="left:288px;top:340.9px">X</div><div class="inp" style="left:323px;top:323px">0</div>
<div class="lbl" style="left:459.5px;top:340.9px">Rx</div><div class="inp" style="left:493px;top:323px">0</div>
<div class="lbl" style="left:288px;top:400.9px">Y</div><div class="inp" style="left:323px;top:383px">0</div>
<div class="lbl" style="left:459.5px;top:400.9px">Ry</div><div class="inp" style="left:493px;top:383px">0</div>
<div class="lbl" style="left:288px;top:460.9px">Z</div><div class="inp" style="left:323px;top:443px">0</div>
<div class="lbl" style="left:459.5px;top:460.9px">Rz</div><div class="inp" style="left:493px;top:443px">0</div>

<div class="t" style="left:288px;top:565.1px;font-size:18px;letter-spacing:0.47px;color:#3f5061">Уровни стека</div>
<div class="inp" style="left:493px;top:543px">1</div>

<div class="abs" style="left:285px;top:987px;width:328px;height:56px;background:#c8e2db;border:1px solid #3a9d80;border-radius:9px"></div>
<div class="t" style="left:392.6px;top:1006px;font-size:20px;letter-spacing:1.0px;color:#1b2c3d">Применить</div>

<div class="t" style="left:10px;top:1054px;font-size:13.3px;color:#6a6a6a">fps: 60</div>
</body>
</html>
